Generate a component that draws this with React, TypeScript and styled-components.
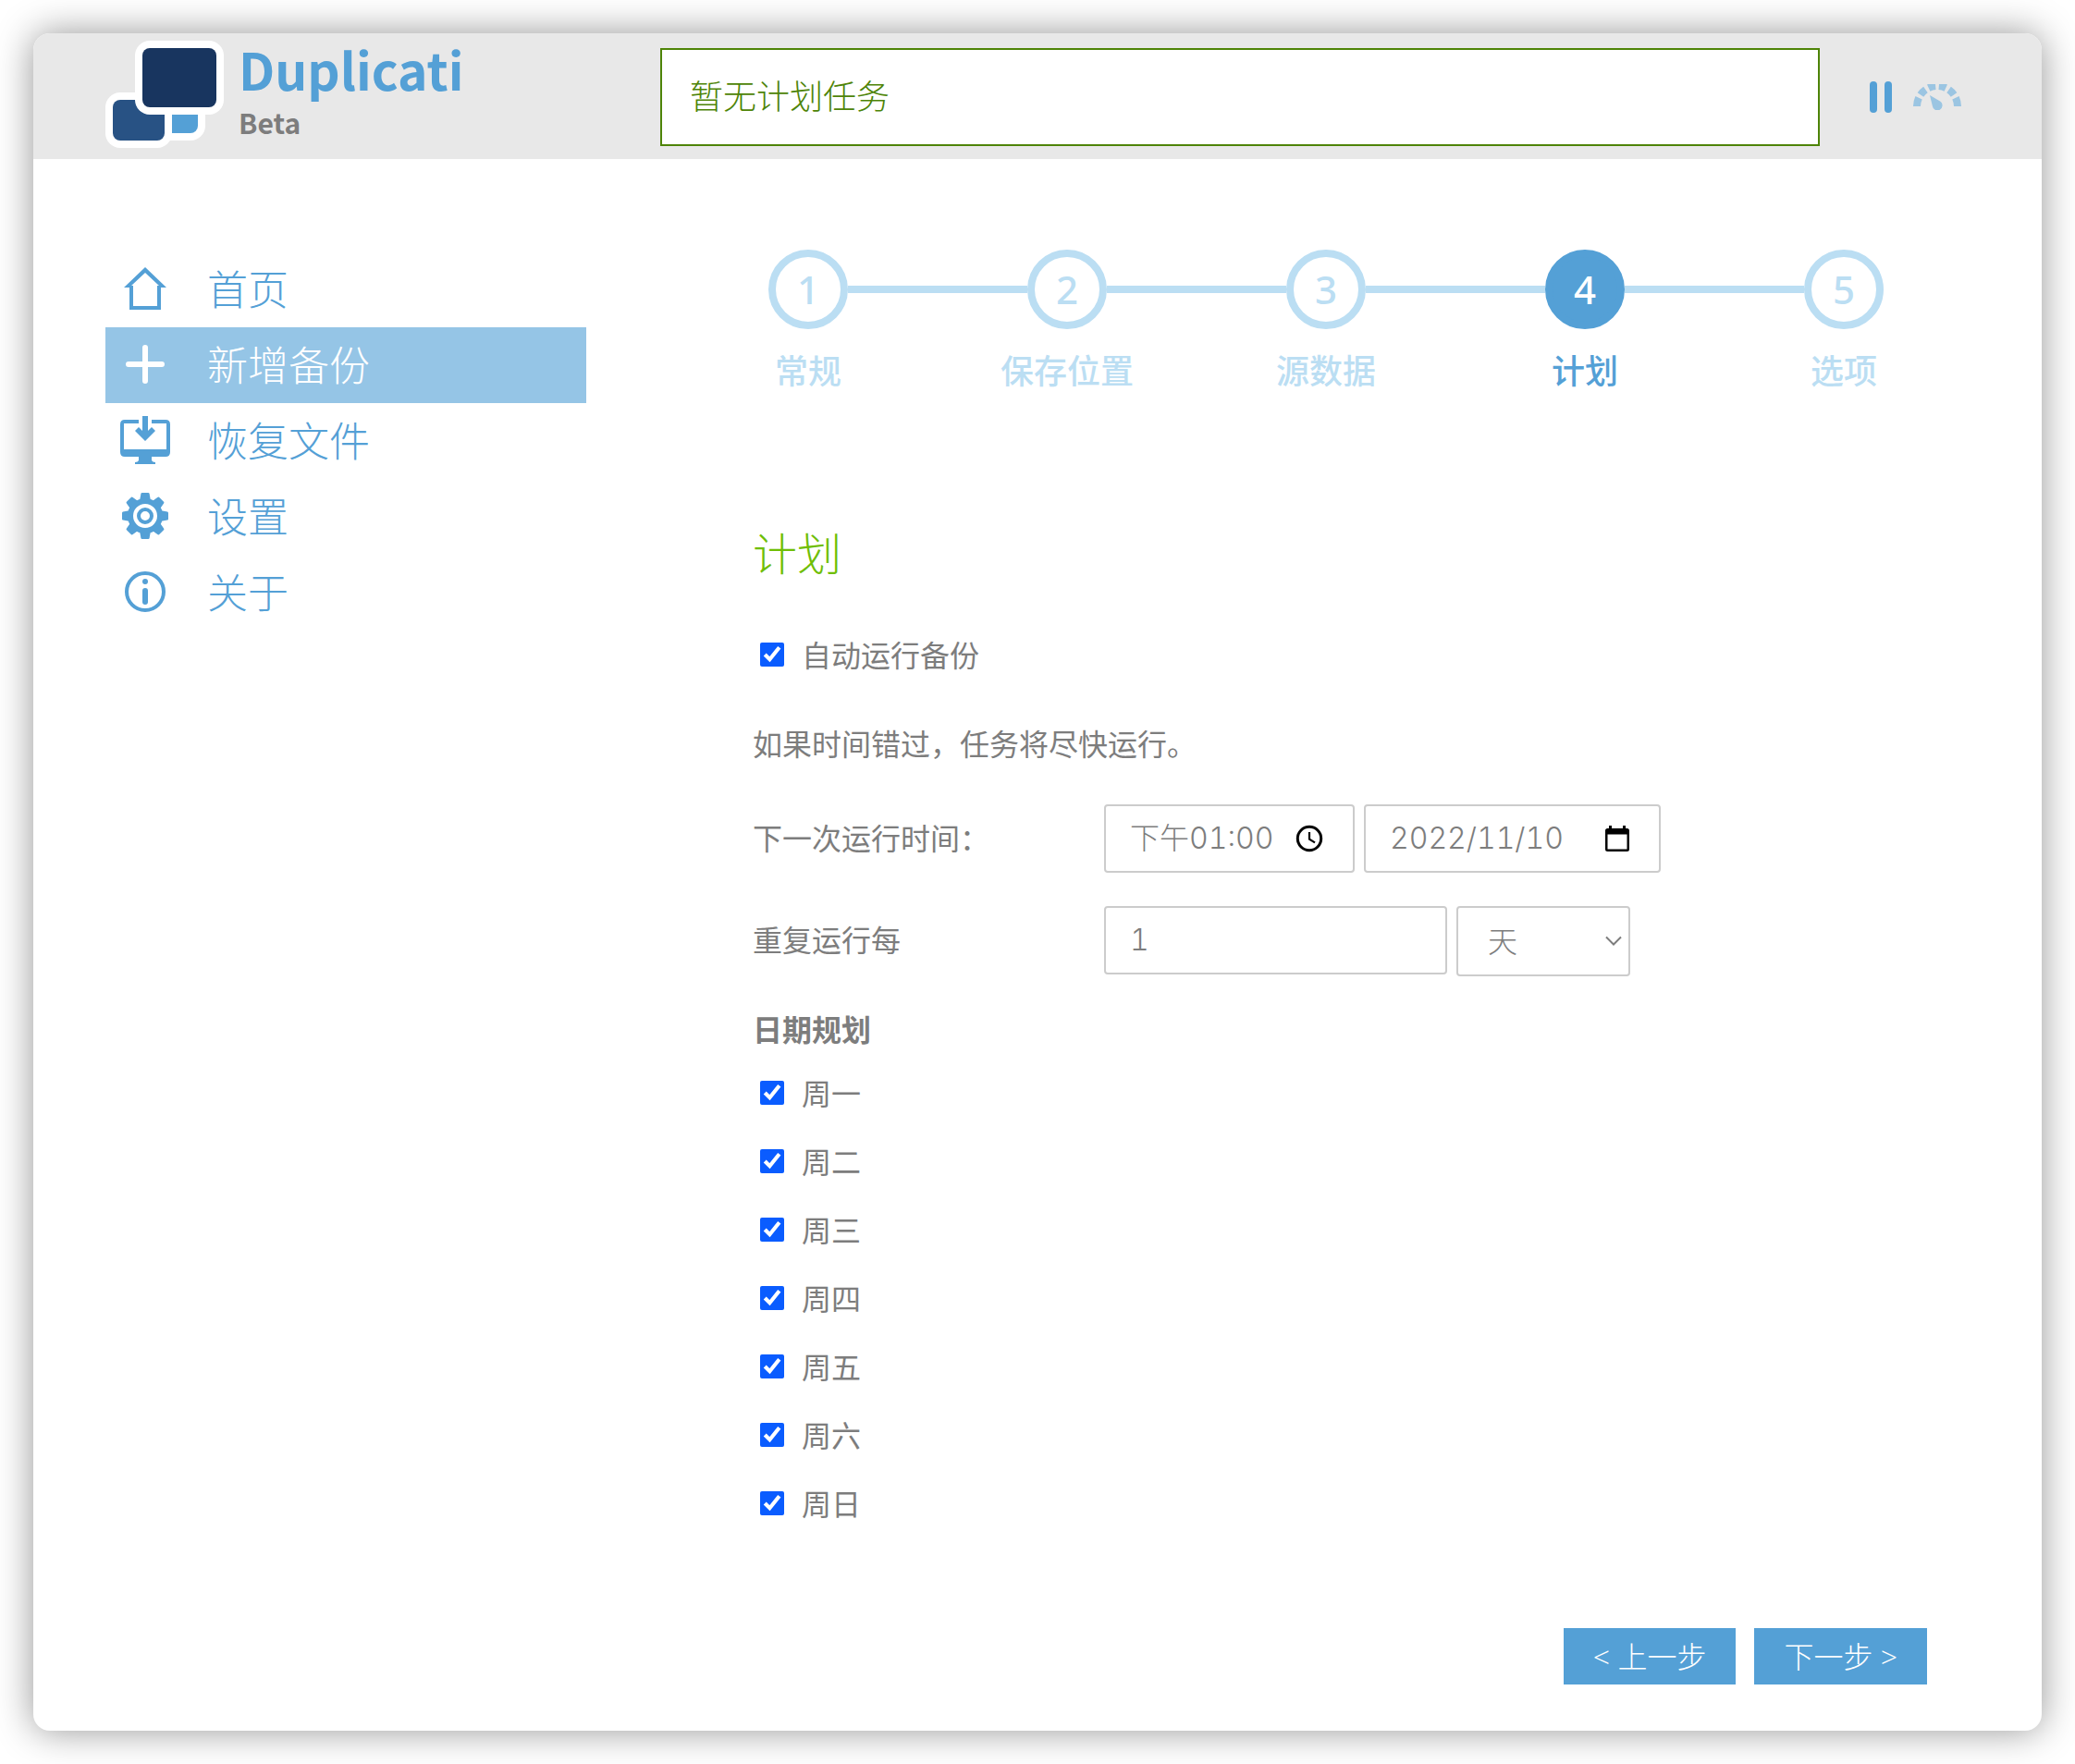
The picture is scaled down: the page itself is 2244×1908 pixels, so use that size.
import React, { useState } from 'react';
import styled, { createGlobalStyle } from 'styled-components';

const BLUE = '#54a0d6';
const PALE = '#bbdef3';
const GREY = '#7d7d7d';
const LINE = '#cccccc';

const GlobalStyle = createGlobalStyle`
  *, *::before, *::after { box-sizing: border-box; }
  body {
    margin: 0;
    background: #fff;
    color: ${GREY};
    font-family: "Open Sans", "Noto Sans CJK SC", sans-serif;
    font-size: 32px;
    line-height: 48px;
  }
  button, input, select { font: inherit; color: inherit; margin: 0; }
`;

const Page = styled.div`
  min-height: 100vh;
  padding: 36px;
  display: flex;
`;

const Window = styled.div`
  flex: 1;
  display: flex;
  flex-direction: column;
  border-radius: 18px;
  background: #fff;
  box-shadow: 0 0 40px rgba(0, 0, 0, 0.42);
`;

const Header = styled.header`
  display: flex;
  align-items: center;
  height: 136px;
  padding: 2px 86px 0 78px;
  border-radius: 18px 18px 0 0;
  background: #e8e8e8;
`;

const Brand = styled.a`
  flex: 0 0 600px;
  align-self: flex-start;
  display: flex;
  gap: 16px;
  padding-top: 6px;
  text-decoration: none;
  font-family: "Noto Sans CJK SC", sans-serif;
  font-weight: 700;
`;

const BrandText = styled.span`
  display: flex;
  flex-direction: column;
`;

const BrandName = styled.span`
  color: ${BLUE};
  font-size: 55px;
  line-height: 60px;
`;

const BrandChannel = styled.span`
  font-size: 30px;
  line-height: 56px;
  color: ${GREY};
`;

const Status = styled.div`
  flex: 1;
  height: 106px;
  padding: 0 30px;
  display: flex;
  align-items: center;
  border: 2px solid #4e8407;
  background: #fff;
  color: #4e8407;
  font-size: 36px;
  font-weight: 300;
`;

const HeaderTools = styled.div`
  display: flex;
  align-items: center;
  gap: 22px;
  margin-left: 54px;
`;

const IconButton = styled.button`
  display: flex;
  padding: 0;
  border: 0;
  background: none;
  cursor: pointer;
`;

const Body = styled.div`
  flex: 1;
  display: flex;
  gap: 100px;
  padding: 98px 74px 50px 78px;
`;

const Nav = styled.nav`
  flex: 0 0 520px;
  padding-top: 2px;
`;

const NavLink = styled.a<{ $active?: boolean }>`
  display: flex;
  align-items: center;
  gap: 40px;
  height: 82px;
  padding-left: 16px;
  text-decoration: none;
  font-size: 44px;
  font-weight: 300;
  color: ${p => (p.$active ? '#fff' : BLUE)};
  background: ${p => (p.$active ? '#95c5e6' : 'transparent')};
`;

const NavIcon = styled.span`
  flex: 0 0 54px;
  display: flex;
  justify-content: center;
  padding-bottom: 2px;
`;

const Main = styled.main`
  flex: 1;
  min-width: 0;
  display: flex;
  flex-direction: column;
`;

const Steps = styled.ol`
  display: grid;
  grid-template-columns: repeat(5, 1fr);
  margin: 0;
  padding: 0;
  list-style: none;
`;

const Step = styled.li<{ $current: boolean }>`
  color: ${p => (p.$current ? BLUE : PALE)};
  font-size: 36px;
  font-weight: 500;
  text-align: center;
`;

const StepTrack = styled.div`
  display: flex;
  align-items: center;
  margin-bottom: 22px;
`;

const StepLine = styled.span<{ $hidden: boolean }>`
  flex: 1;
  height: 8px;
  background: ${p => (p.$hidden ? 'transparent' : PALE)};
`;

const StepCircle = styled.span<{ $current: boolean }>`
  width: 86px;
  height: 86px;
  display: flex;
  align-items: center;
  justify-content: center;
  border: 8px solid ${p => (p.$current ? BLUE : PALE)};
  border-radius: 50%;
  background: ${p => (p.$current ? BLUE : '#fff')};
  color: ${p => (p.$current ? '#fff' : PALE)};
  font-family: "Noto Sans", "Open Sans", sans-serif;
  font-size: 42px;
`;

const Form = styled.form`
  flex: 1;
  display: flex;
  flex-direction: column;
  padding: 0 50px 0 80px;
`;

const Title = styled.h2`
  margin: 143px 0 56px;
  color: #6fbe05;
  font-size: 48px;
  line-height: 60px;
  font-weight: 300;
`;

const Note = styled.p`
  margin: 48px 0 41px;
`;

const FieldRows = styled.div`
  display: flex;
  flex-direction: column;
  gap: 36px;
  margin-bottom: 34px;
`;

const FieldRow = styled.div`
  display: grid;
  grid-template-columns: 380px 1fr;
`;

const FieldLabel = styled.label`
  line-height: 74px;
`;

const Fields = styled.div`
  display: flex;
  align-items: flex-start;
  gap: 10px;
`;

const FieldBox = styled.div<{ $width: number }>`
  display: flex;
  align-items: center;
  gap: 20px;
  width: ${p => p.$width}px;
  height: 74px;
  padding: 0 30px 0 26px;
  border: 2px solid ${LINE};
  border-radius: 4px;
`;

const FieldInput = styled.input`
  flex: 1;
  min-width: 0;
  padding: 0;
  border: 0;
  outline: 0;
  background: none;
  font-family: Inter, "Noto Sans CJK SC", sans-serif;
  font-weight: 300;
  font-variant-numeric: tabular-nums;
  appearance: textfield;
  &::-webkit-inner-spin-button { appearance: none; }
`;

const SelectBox = styled.div`
  display: grid;
  align-items: center;
  width: 188px;
  height: 76px;
  border: 2px solid ${LINE};
  border-radius: 4px;
  font-weight: 300;
  & > * { grid-area: 1 / 1; }
  & > svg { justify-self: end; margin-right: 6px; pointer-events: none; }
`;

const Select = styled.select`
  width: 100%;
  height: 100%;
  padding: 0 32px;
  border: 0;
  outline: 0;
  background: none;
  appearance: none;
`;

const Days = styled.fieldset`
  margin: 0 0 60px;
  padding: 0;
  border: 0;
`;

const DaysTitle = styled.legend`
  padding: 0;
  margin-bottom: 8px;
  font-weight: 700;
`;

const CheckRow = styled.label<{ $tall?: boolean }>`
  display: flex;
  align-items: center;
  gap: 19px;
  height: ${p => (p.$tall ? 74 : 48)}px;
  padding-left: 8px;
`;

const Checkbox = styled.input`
  width: 26px;
  height: 26px;
  accent-color: #0a5cff;
  && { margin-bottom: 2px; }
`;

const Actions = styled.div`
  display: flex;
  justify-content: flex-end;
  gap: 20px;
  margin-top: auto;
`;

const ActionButton = styled.button`
  height: 61px;
  padding: 0 32px;
  border: 0;
  background: ${BLUE};
  color: #fff;
  font-weight: 300;
  cursor: pointer;
`;

const Logo = () => (
  <svg width="128" height="116" viewBox="0 0 128 116" aria-hidden="true">
    <rect x="50" y="50" width="58" height="58" rx="16" fill="#fff" />
    <rect x="58" y="58" width="42" height="42" rx="8" fill={BLUE} />
    <rect x="0" y="56" width="72" height="60" rx="16" fill="#fff" />
    <rect x="8" y="64" width="56" height="44" rx="8" fill="#285284" />
    <rect x="32" y="0" width="96" height="80" rx="16" fill="#fff" />
    <rect x="40" y="8" width="80" height="64" rx="8" fill="#18355f" />
  </svg>
);

const PauseIcon = () => (
  <svg width="24" height="34" viewBox="0 0 24 34" fill={BLUE}>
    <rect width="8" height="34" rx="4" />
    <rect x="16" width="8" height="34" rx="4" />
  </svg>
);

const GaugeIcon = () => (
  <svg width="54" height="28" viewBox="-1 0 54 28">
    <path
      d="M4 24A22 22 0 0 1 48 24"
      fill="none"
      stroke="#9bc5e2"
      strokeWidth="8"
      pathLength={180}
      strokeDasharray="25 10 20 10 20 10 20 10 20 10 25 10"
    />
    <path d="M18 12L29.5 18.7A5.4 5.4 0 1 1 20.8 23.5Z" fill="#9bc5e2" />
  </svg>
);

const HomeIcon = () => (
  <svg width="46" height="46" viewBox="0 0 46 46" fill="currentColor">
    <path fillRule="evenodd" d="M23 0L46 22H40V46H6V22H0ZM23 6L8 20H10V42H36V20H38Z" />
  </svg>
);

const PlusIcon = () => (
  <svg width="42" height="42" viewBox="0 0 42 42" stroke="currentColor" strokeWidth="6" strokeLinecap="round">
    <path d="M21 3V39M3 21H39" />
  </svg>
);

const RestoreIcon = () => (
  <svg width="54" height="52" viewBox="0 0 54 52" fill="currentColor">
    <path d="M20 4H5Q0 4 0 9V39Q0 44 5 44H20V48Q19 50 16 50V52H38V50Q35 50 34 48V44H49Q54 44 54 39V9Q54 4 49 4H34V8H50V36H4V8H20Z" />
    <path d="M24 0H30V16L34 12L38 16L27 27L16 16L20 12L24 16Z" />
  </svg>
);

const GearIcon = () => (
  <svg width="50" height="50" viewBox="-25 -25 50 50" fill="currentColor">
    {[0, 45, 90, 135, 180, 225, 270, 315].map(angle => (
      <path key={angle} d="M-6 -16L-4.6 -24Q-4.4 -25 -3.4 -25H3.4Q4.4 -25 4.6 -24L6 -16Z" transform={`rotate(${angle})`} />
    ))}
    <circle r="16" fill="none" stroke="currentColor" strokeWidth="6" />
    <circle r="7" fill="none" stroke="currentColor" strokeWidth="4" />
  </svg>
);

const InfoIcon = () => (
  <svg width="44" height="44" viewBox="0 0 44 44" fill="currentColor">
    <circle cx="22" cy="22" r="20" fill="none" stroke="currentColor" strokeWidth="4" />
    <circle cx="22" cy="11" r="3" />
    <rect x="19" y="18" width="6" height="18" rx="3" />
  </svg>
);

const ClockIcon = () => (
  <svg width="34" height="30" viewBox="-2 0 34 30" fill="none" stroke="#000" strokeWidth="3">
    <circle cx="15" cy="15" r="12.7" />
    <path d="M15 8V15.6L21 19.4" strokeWidth="2.2" />
  </svg>
);

const CalendarIcon = () => (
  <svg width="30" height="30" viewBox="0 0 30 30">
    <path
      fillRule="evenodd"
      d="M6 1H9V4H21V1H24V4H25.500Q28 4 28 6.500V26.500Q28 29 25.500 29H4.500Q2 29 2 26.500V6.500Q2 4 4.500 4H6ZM4.500 10.500V26.500H25.500V10.500Z"
    />
  </svg>
);

const ChevronIcon = () => (
  <svg width="20" height="12" viewBox="0 0 20 12" fill="none" stroke={GREY} strokeWidth="2">
    <path d="M2 1.500L10 9.500L18 1.500" />
  </svg>
);

const navItems = [
  { label: '首页', icon: <HomeIcon /> },
  { label: '新增备份', icon: <PlusIcon />, active: true },
  { label: '恢复文件', icon: <RestoreIcon /> },
  { label: '设置', icon: <GearIcon /> },
  { label: '关于', icon: <InfoIcon /> },
];

const steps = ['常规', '保存位置', '源数据', '计划', '选项'];
const currentStep = 3;
const days = ['周一', '周二', '周三', '周四', '周五', '周六', '周日'];

export default function App() {
  const [auto, setAuto] = useState(true);
  const [selected, setSelected] = useState<string[]>(days);
  const toggleDay = (day: string) =>
    setSelected(list => (list.includes(day) ? list.filter(d => d !== day) : [...list, day]));

  return (
    <Page>
      <GlobalStyle />
      <Window>
        <Header>
          <Brand href="#">
            <Logo />
            <BrandText>
              <BrandName>Duplicati</BrandName>
              <BrandChannel>Beta</BrandChannel>
            </BrandText>
          </Brand>
          <Status>暂无计划任务</Status>
          <HeaderTools>
            <IconButton type="button" aria-label="暂停"><PauseIcon /></IconButton>
            <IconButton type="button" aria-label="限速"><GaugeIcon /></IconButton>
          </HeaderTools>
        </Header>
        <Body>
          <Nav>
            {navItems.map(item => (
              <NavLink key={item.label} href="#" $active={item.active}>
                <NavIcon>{item.icon}</NavIcon>
                {item.label}
              </NavLink>
            ))}
          </Nav>
          <Main>
            <Steps>
              {steps.map((name, i) => (
                <Step key={name} $current={i === currentStep}>
                  <StepTrack>
                    <StepLine $hidden={i === 0} />
                    <StepCircle $current={i === currentStep}>{i + 1}</StepCircle>
                    <StepLine $hidden={i === steps.length - 1} />
                  </StepTrack>
                  {name}
                </Step>
              ))}
            </Steps>
            <Form onSubmit={e => e.preventDefault()}>
              <Title>计划</Title>
              <CheckRow>
                <Checkbox type="checkbox" checked={auto} onChange={() => setAuto(!auto)} />
                自动运行备份
              </CheckRow>
              <Note>如果时间错过，任务将尽快运行。</Note>
              <FieldRows>
                <FieldRow>
                  <FieldLabel htmlFor="next-time">下一次运行时间：</FieldLabel>
                  <Fields>
                    <FieldBox $width={271}>
                      <FieldInput id="next-time" type="text" defaultValue="下午01:00" />
                      <IconButton type="button" aria-label="选择时间"><ClockIcon /></IconButton>
                    </FieldBox>
                    <FieldBox $width={321}>
                      <FieldInput type="text" aria-label="日期" defaultValue="2022/11/10" />
                      <IconButton type="button" aria-label="选择日期"><CalendarIcon /></IconButton>
                    </FieldBox>
                  </Fields>
                </FieldRow>
                <FieldRow>
                  <FieldLabel htmlFor="repeat">重复运行每</FieldLabel>
                  <Fields>
                    <FieldBox $width={371}>
                      <FieldInput id="repeat" type="number" defaultValue={1} />
                    </FieldBox>
                    <SelectBox>
                      <Select aria-label="周期单位" defaultValue="天">
                        <option>天</option>
                      </Select>
                      <ChevronIcon />
                    </SelectBox>
                  </Fields>
                </FieldRow>
              </FieldRows>
              <Days>
                <DaysTitle>日期规划</DaysTitle>
                {days.map(day => (
                  <CheckRow key={day} $tall>
                    <Checkbox type="checkbox" checked={selected.includes(day)} onChange={() => toggleDay(day)} />
                    {day}
                  </CheckRow>
                ))}
              </Days>
              <Actions>
                <ActionButton type="button">&lt; 上一步</ActionButton>
                <ActionButton type="submit">下一步 &gt;</ActionButton>
              </Actions>
            </Form>
          </Main>
        </Body>
      </Window>
    </Page>
  );
}
